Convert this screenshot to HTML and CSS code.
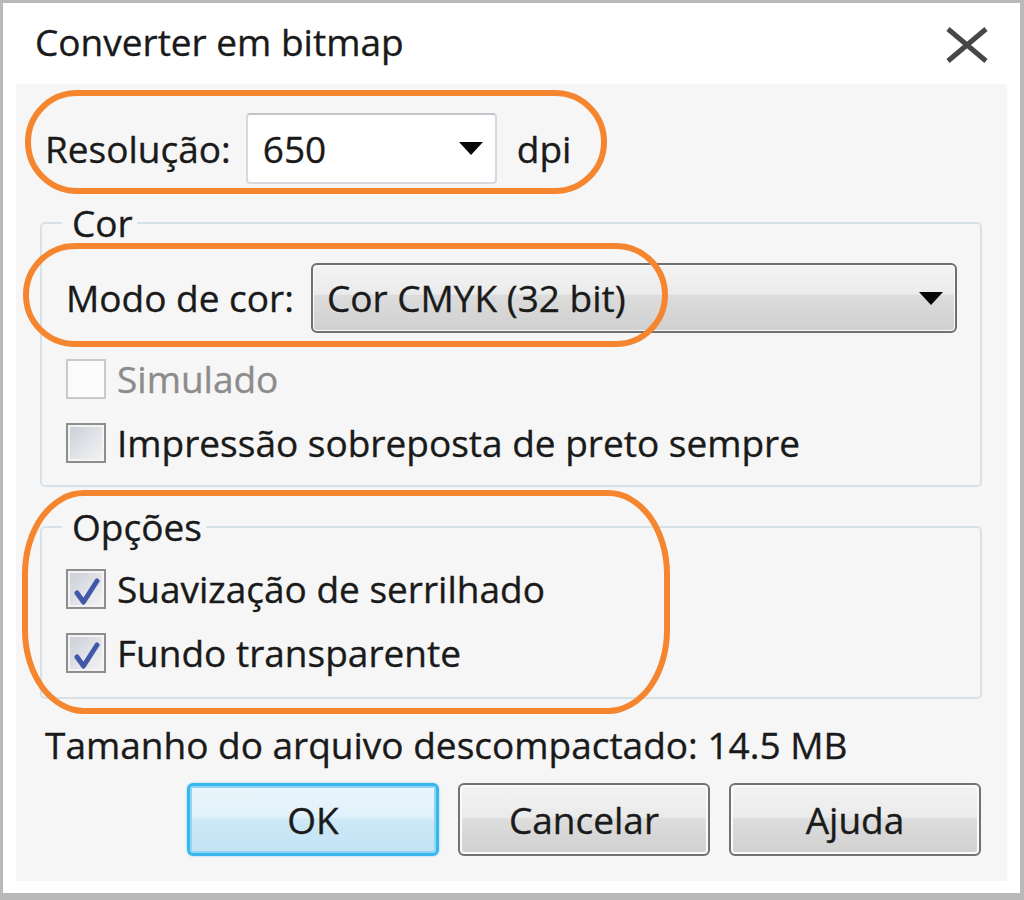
FILE: index.html
```html
<!DOCTYPE html>
<html lang="pt">
<head>
<meta charset="utf-8">
<title>Converter em bitmap</title>
<link rel="stylesheet" href="styles.css">
</head>
<body>
<div class="window">
  <div class="titlebar">
    <span class="title">Converter em bitmap</span>
    <svg class="close" width="44" height="36" viewBox="0 0 44 36">
      <path d="M3 2 L41 34 M41 2 L3 34" stroke="#474747" stroke-width="5" fill="none"/>
    </svg>
  </div>
  <div class="content">
    <div class="res-row">
      <span class="res-label">Resolução:</span>
      <div class="input">
        <span class="value">650</span>
        <span class="tri"></span>
      </div>
      <span class="unit">dpi</span>
    </div>

    <fieldset class="group group-cor">
      <legend>Cor</legend>
      <div class="mode-row">
        <span class="mode-label">Modo de cor:</span>
        <div class="combo">
          <span class="value">Cor CMYK (32 bit)</span>
          <span class="tri"></span>
        </div>
      </div>
      <div class="check disabled first">
        <span class="box"></span>
        <span class="text">Simulado</span>
      </div>
      <div class="check">
        <span class="box"></span>
        <span class="text">Impressão sobreposta de preto sempre</span>
      </div>
    </fieldset>

    <fieldset class="group group-opts">
      <legend>Opções</legend>
      <div class="check checked first">
        <span class="box"><svg width="36" height="36" viewBox="0 0 36 36"><path d="M9 22 L15.5 31 L29 10" stroke="#4158a8" stroke-width="5" fill="none" stroke-linecap="round" stroke-linejoin="round"/></svg></span>
        <span class="text">Suavização de serrilhado</span>
      </div>
      <div class="check checked">
        <span class="box"><svg width="36" height="36" viewBox="0 0 36 36"><path d="M9 22 L15.5 31 L29 10" stroke="#4158a8" stroke-width="5" fill="none" stroke-linecap="round" stroke-linejoin="round"/></svg></span>
        <span class="text">Fundo transparente</span>
      </div>
    </fieldset>

    <div class="size">Tamanho do arquivo descompactado: 14.5 MB</div>

    <div class="buttons">
      <button class="btn primary">OK</button>
      <button class="btn">Cancelar</button>
      <button class="btn">Ajuda</button>
    </div>

    <div class="oval oval-res"></div>
    <div class="oval oval-mode"></div>
    <div class="oval oval-opts"></div>
  </div>
</div>
</body>
</html>
```

FILE: styles.css
```css
* {
  box-sizing: border-box;
}

html, body {
  margin: 0;
  padding: 0;
  background: #ffffff;
}

body {
  font-family: "Open Sans", "Noto Sans", sans-serif;
  font-size: 37px;
  line-height: 40px;
  color: #1a1a1a;
  -webkit-text-stroke: 0.35px currentColor;
}

.window {
  width: 1024px;
  height: 900px;
  background: #ffffff;
  border-style: solid;
  border-color: #b9b9b9;
  border-width: 3px 4px 7px 3px;
  display: flex;
  flex-direction: column;
}

.titlebar {
  height: 81px;
  flex: none;
  display: flex;
  align-items: center;
  justify-content: space-between;
  padding: 0 31px 0 32px;
}

.title {
  color: #1a1a1a;
  margin-top: -3px;
}

.close {
  display: block;
  margin-top: 2px;
}

.content {
  position: relative;
  height: 797px;
  margin: 0 13px;
  background: #f6f6f6;
  padding: 28px 25px 0 29px;
}

/* Resolução row */
.res-row {
  display: flex;
  align-items: center;
  height: 73px;
}

.res-label {
  margin-right: 15px;
}

.input {
  width: 251px;
  height: 71px;
  background: #ffffff;
  border: 2px solid #d6d9dd;
  border-top-color: #c2c6cb;
  border-radius: 4px;
  display: flex;
  align-items: center;
  justify-content: space-between;
  padding: 0 12px 0 15px;
}

.tri {
  width: 0;
  height: 0;
  border-left: 12px solid transparent;
  border-right: 12px solid transparent;
  border-top: 13px solid #050505;
}

.unit {
  margin-left: 20px;
}

/* Group boxes */
.group {
  margin: 18px 0 0 -5px;
  border: 2px solid #d7e1e8;
  border-radius: 5px;
  padding: 20px 23px 19px 24px;
  min-width: 0;
}

.group legend {
  padding: 0 4px 0 10px;
  margin-left: -4px;
  line-height: 40px;
}

.group-opts {
  margin-top: 20px;
  padding-top: 19px;
  padding-bottom: 21px;
}

.mode-row {
  display: flex;
  align-items: center;
  height: 70px;
}

.mode-label {
  margin-right: 17px;
  white-space: nowrap;
}

.combo {
  flex: 1;
  height: 70px;
  border: 2px solid #6f6f6f;
  border-radius: 6px;
  background: linear-gradient(#f3f3f3 0%, #ebebeb 44%, #dcdcdc 46%, #d0d0d0 100%);
  box-shadow: inset 0 0 0 1px #fbfbfb;
  display: flex;
  align-items: center;
  justify-content: space-between;
  padding: 0 12px 0 14px;
}

/* Checkboxes */
.check {
  display: flex;
  align-items: center;
  height: 46px;
  margin-top: 18px;
}

.check.first {
  margin-top: 23px;
}

.group-opts .check.first {
  margin-top: 0;
}

.box {
  width: 40px;
  height: 40px;
  flex: none;
  border: 2px solid #8e8e8e;
  background: linear-gradient(135deg, #c9cdd5 0%, #e4e6eb 60%, #f4f4f4 100%);
  box-shadow: inset 0 0 0 2px #f4f4f4;
  margin-right: 11px;
  display: flex;
  align-items: center;
  justify-content: center;
}

.check.disabled .box {
  border-color: #c9c9c9;
  background: #fbfbfb;
  box-shadow: none;
}

.check.disabled .text {
  color: #8c8c8c;
}

.size {
  margin-top: 26px;
  white-space: nowrap;
}

/* Buttons */
.buttons {
  display: flex;
  justify-content: flex-end;
  gap: 19px;
  margin-top: 18px;
  margin-right: 1px;
}

.btn {
  width: 252px;
  height: 73px;
  font: inherit;
  color: #1a1a1a;
  border: 2px solid #727272;
  border-radius: 6px;
  background: linear-gradient(#f3f3f3 0%, #ebebeb 46%, #dddddd 50%, #d0d0d0 100%);
  box-shadow: inset 0 0 0 2px #fafafa;
  padding: 0;
}

.btn.primary {
  border: 3px solid #39b6ec;
  background: linear-gradient(#eaf5fc 0%, #e1f1fb 46%, #cde8f6 50%, #c3e3f4 100%);
  box-shadow: inset 0 0 0 2px #8fd6f6, 0 0 2px #6ccaf2;
}

/* Orange annotation ovals */
.oval {
  position: absolute;
  border: 6px solid #f5862f;
  pointer-events: none;
}

.oval-res {
  left: 9px;
  top: 6px;
  width: 582px;
  height: 104px;
  border-radius: 52px;
}

.oval-mode {
  left: 7px;
  top: 159px;
  width: 645px;
  height: 104px;
  border-radius: 52px;
}

.oval-opts {
  left: 6px;
  top: 406px;
  width: 648px;
  height: 224px;
  border-radius: 62px / 84px;
}
```
